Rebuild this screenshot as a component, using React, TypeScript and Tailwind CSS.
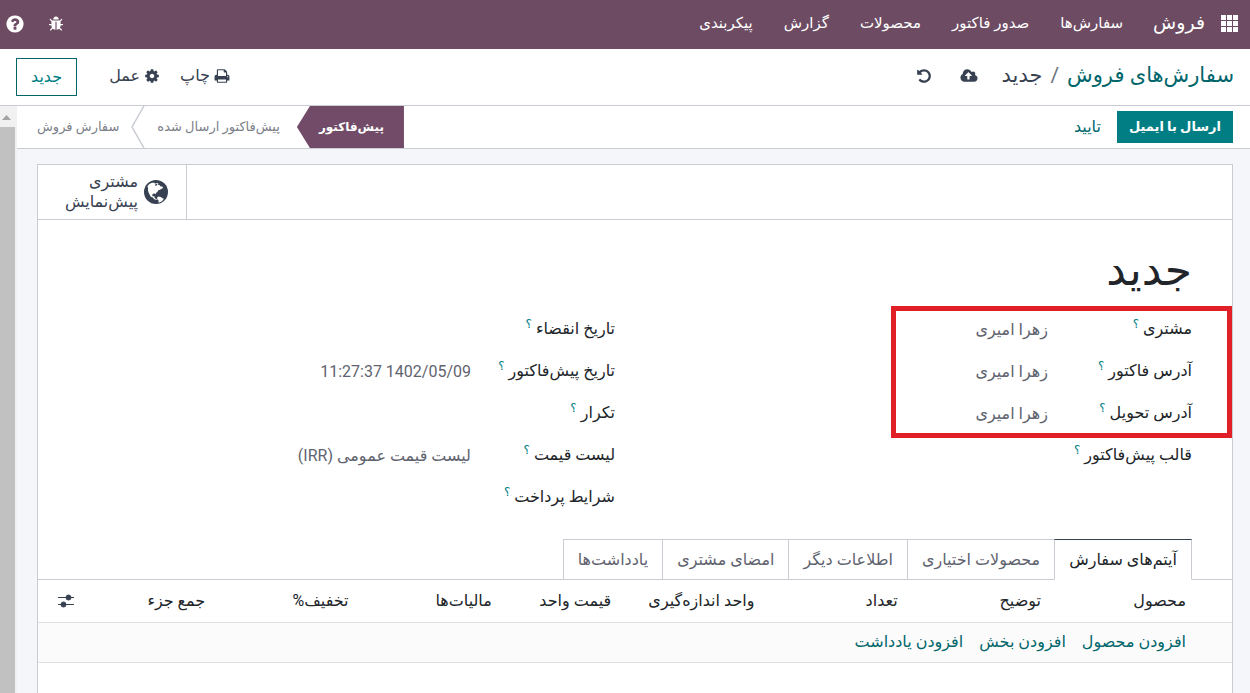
const ICONS = {
  question: {
    w: 1536,
    d: "M896 1376v-192q0-14-9-23t-23-9H672q-14 0-23 9t-9 23v192q0 14 9 23t23 9h192q14 0 23-9t9-23zm256-672q0-88-55.5-163T958 425t-170-41q-243 0-371 213-15 24 8 42l132 100q7 6 19 6 16 0 25-12 53-68 86-92 34-24 86-24 48 0 85.5 26t37.5 59q0 38-20 61t-68 45q-63 28-115.5 86.5T640 1020v36q0 14 9 23t23 9h192q14 0 23-9t9-23q0-19 21.5-49.5T972 957q32-18 49-28.5t46-35 44.5-48 28-60.5 12.5-81zm384 192q0 209-103 385.5T1153.500 1561 768 1664t-385.500-103T103 1281.500 0 896t103-385.500T382.500 231 768 128t385.500 103T1433 510.500 1536 896z",
  },
  bug: {
    w: 1664,
    d: "M1632 960q0 26-19 45t-45 19h-224q0 171-67 290l208 209q19 19 19 45t-19 45q-18 19-45 19t-45-19l-198-197q-5 5-15 13t-42 28.500-65 36.500-82 29-97 13V640H768v896q-51 0-101.500-13.500t-87-33-66-39-43.500-32.500l-15-14-183 207q-20 21-48 21-24 0-43-16-19-18-20.500-44.500T176 1525l202-227q-58-114-58-274H96q-26 0-45-19t-19-45 19-45 45-19h224V602L147 429q-19-19-19-45t19-45 45-19 45 19l173 173h844l173-173q19-19 45-19t45 19 19 45-19 45l-173 173v294h224q26 0 45 19t19 45zM1152 384H512q0-133 93.500-226.500T832 64t226.500 93.500T1152 384z",
  },
  print: {
    w: 1664,
    d: "M384 1536h896v-256H384v256zm0-640h896V512h-160q-40 0-68-28t-28-68V256H384v640zm1152 64q0-26-19-45t-45-19-45 19-19 45 19 45 45 19 45-19 19-45zm128 0v416q0 13-9.500 22.500t-22.500 9.500h-224v160q0 40-28 68t-68 28H352q-40 0-68-28t-28-68v-160H32q-13 0-22.500-9.500T0 1376V960q0-79 56.500-135.500T192 768h64V224q0-40 28-68t68-28h672q40 0 88 20t76 48l152 152q28 28 48 76t20 88v256h64q79 0 135.500 56.500T1664 960z",
  },
  cog: {
    w: 1536,
    d: "M1024 896q0-106-75-181t-181-75-181 75-75 181 75 181 181 75 181-75 75-181zm512-109v222q0 12-8 23t-20 13l-185 28q-19 54-39 91 35 50 107 138 10 12 10 25t-9 23q-27 37-99 108t-94 71q-12 0-26-9l-138-108q-44 23-91 38-16 136-29 186-7 28-36 28H657q-14 0-24.500-8.500T621 1642l-28-184q-49-16-90-37l-141 107q-10 9-25 9-14 0-25-11-126-114-165-168-7-10-7-23 0-12 8-23 15-21 51-66.500t54-70.500q-27-50-41-99L29 1048q-13-2-21-12.500T0 1012V790q0-12 8-23t19-13l186-28q14-46 39-92-40-57-107-138-10-12-10-24 0-10 9-23 26-36 98.500-107.500T337 270q13 0 26 10l138 107q44-23 91-38 16-136 29-186 7-28 36-28h222q14 0 24.500 8.500T915 165l28 184q49 16 90 37l142-107q9-9 24-9 13 0 25 10 129 119 165 170 7 8 7 22 0 12-8 23-15 21-51 66.500t-54 70.500q26 50 41 98l183 28q13 2 21 12.500t8 23.500z",
  },
  cloud: {
    w: 1920,
    d: "M1280 864q0-14-9-23L919 489q-9-9-23-9t-23 9L522 840q-10 12-10 24 0 14 9 23t23 9h224v352q0 13 9.500 22.500t22.500 9.500h192q13 0 22.500-9.500t9.500-22.500V896h224q13 0 22.500-9.500t9.500-22.500zm640 288q0 159-112.500 271.500T1536 1536H448q-185 0-316.500-131.500T0 1088q0-130 70-240t188-165q-2-30-2-43 0-212 150-362t362-150q156 0 285.500 87T1242 446q71-62 166-62 106 0 181 75t75 181q0 76-41 138 130 31 213.500 135.500T1920 1152z",
  },
  undo: {
    w: 1536,
    d: "M1536 896q0 156-61 298t-164 245-245 164-298 61q-172 0-327-72.500T177 1387q-7-10-6.500-22.500t8.500-20.500l137-138q10-9 25-9 16 2 23 12 73 95 179 147t225 52q104 0 198.500-40.500T1130 1258t109.500-163.500T1280 896t-40.500-198.500T1130 534 966.500 424.500 768 384q-98 0-188 35.500T420 521l137 138q31 30 14 69-17 40-59 40H64q-26 0-45-19T0 704V256q0-42 40-59 39-17 69 14l130 129q107-101 244.500-156.500T768 128q156 0 298 61t245 164 164 245 61 298z",
  },
};

const Icon = ({ name, className }: { name: keyof typeof ICONS; className: string }) => (
  <svg viewBox={`0 0 ${ICONS[name].w} 1792`} className={className} fill="currentColor" aria-hidden="true">
    <path d={ICONS[name].d} />
  </svg>
);

const Globe = () => (
  <svg viewBox="0 0 24 24" className="h-6 w-6 shrink-0" aria-hidden="true">
    <circle cx="12" cy="12" r="12" fill="#374151" />
    {/* North America */}
    <path
      fill="#fff"
      d="M3.400 6.200 5.300 4 8 2.700l2.200.1 1.200.9 1.300-.8 1.800.5-.6 1.400 1.500.3 1.300 1.300 1.600.2.900 1.500-1.700.7-1.500 1-1.700.5-.9 1.600-1.500 1.200-.2 1.400-.9-.9-1.900.2-.7 1.500.6 1.200 1.500-.4.2 1.300 1.300 1.500 1.400.5-.8.500-2-.7-1.700-1.700-1.900-.8-1.100-1.900-1.100-2.200-.7-2.400.200-2.200z"
    />
    {/* South America */}
    <path fill="#fff" d="m13.200 17.300 1.700-.8 1.900.5 1.400 1.100 1.600.6-.8 1.500-1.900 1.500-2.400 1.100-.2-2.300-1.400-1.500z" />
    <path fill="#374151" d="m11.500 4.200 1.300-.4.6.8-.7 1-1.200.2-.6-.8z" />
  </svg>
);

const menu = ["سفارش‌ها", "صدور فاکتور", "محصولات", "گزارش", "پیکربندی"];

const customerFields = [
  { id: "customer", label: "مشتری", value: "زهرا امیری" },
  { id: "invoice-address", label: "آدرس فاکتور", value: "زهرا امیری" },
  { id: "delivery-address", label: "آدرس تحویل", value: "زهرا امیری" },
  { id: "template", label: "قالب پیش‌فاکتور", value: "" },
];

const orderFields = [
  { id: "expiration", label: "تاریخ انقضاء", value: "" },
  { id: "quotation-date", label: "تاریخ پیش‌فاکتور", value: "1402/05/09 11:27:37" },
  { id: "recurrence", label: "تکرار", value: "" },
  { id: "pricelist", label: "لیست قیمت", value: "لیست قیمت عمومی (IRR)" },
  { id: "payment-terms", label: "شرایط پرداخت", value: "" },
];

const tabs = ["آیتم‌های سفارش", "محصولات اختیاری", "اطلاعات دیگر", "امضای مشتری", "یادداشت‌ها"];

const columns = [
  { label: "محصول", width: "w-[16%] pr-[46px]" },
  { label: "توضیح", width: "w-[12%]" },
  { label: "تعداد", width: "w-[12%]" },
  { label: "واحد اندازه‌گیری", width: "w-[12%]" },
  { label: "قیمت واحد", width: "w-[10%]" },
  { label: "مالیات‌ها", width: "w-[12%]" },
  { label: "تخفیف%", width: "w-[12%]" },
  { label: "جمع جزء", width: "w-[11%]" },
];

type FieldProps = { id: string; label: string; value: string };

const Field = ({ id, label, value }: FieldProps) => (
  <div className="flex h-[42px] items-center">
    <label htmlFor={id} className="w-36 shrink-0 whitespace-nowrap text-[#212529]">
      {label} <sup className="text-xs text-[#017e84]">؟</sup>
    </label>
    <input id={id} defaultValue={value} className="min-w-0 flex-1 bg-transparent pt-[2px] text-[#5f636f] outline-none" />
  </div>
);

const App = () => {
  return (
    <div dir="rtl" className="flex h-screen flex-col overflow-hidden bg-white font-['Roboto','DejaVu_Sans',sans-serif] text-base text-[#374151]">
      {/* Navbar */}
      <header className="flex h-[49px] shrink-0 items-center bg-[#6d4c63] pr-3 pb-[2px] pl-[6px] text-white">
        <button title="منو">
          <svg viewBox="0 0 17 17" className="h-[17px] w-[17px]" fill="currentColor">
            {[0, 6, 12].map((y) => [0, 6, 12].map((x) => <rect key={`${x}-${y}`} x={x} y={y} width="5" height="5" />))}
          </svg>
        </button>
        <a href="#" className="mr-4 text-[19px]">فروش</a>
        <nav className="mr-[30px] flex gap-[31px] text-[15px]">
          {menu.map((m) => (
            <a key={m} href="#">{m}</a>
          ))}
        </nav>
        <div className="mr-auto flex items-center gap-6">
          <button title="اشکال‌زدایی"><Icon name="bug" className="h-4 w-4" /></button>
          <button title="راهنما"><Icon name="question" className="h-5 w-[18px]" /></button>
        </div>
      </header>

      {/* Control panel */}
      <div className="flex h-[57px] shrink-0 items-center border-b border-[#c9ccd2] px-4 pb-[2px]">
        <h2 className="flex gap-2 text-[21px]">
          <a href="#" className="text-[#01666b]">سفارش‌های فروش</a>
          <span className="text-[#6b7280]">/</span>
          <span>جدید</span>
        </h2>
        <button title="ذخیره" className="mr-6"><Icon name="cloud" className="h-4 w-[18px]" /></button>
        <button title="لغو" className="mr-7"><Icon name="undo" className="h-4 w-4" /></button>
        <div className="mr-auto flex items-center">
          <button className="flex items-center gap-1"><Icon name="print" className="h-4 w-4" />چاپ</button>
          <button className="mr-5 flex items-center gap-1"><Icon name="cog" className="h-4 w-4" />عمل</button>
          <button className="mt-[2px] mr-8 h-[38px] border border-[#01666b] px-[14px] text-[#017e84]">جدید</button>
        </div>
      </div>

      <div className="flex min-h-0 flex-1">
        <main className="flex min-w-0 flex-1 flex-col bg-[#f5f6fa]">
          {/* Status bar */}
          <div className="flex h-[43px] shrink-0 items-center border-b border-[#c9ccd2] bg-white pr-[17px]">
            <button className="h-8 bg-[#017e84] px-3 text-[13px] font-bold text-white">ارسال با ایمیل</button>
            <button className="mr-4 text-[#01666b]">تایید</button>
            <div className="mr-auto flex items-center pl-5 text-[13px] text-[#7c7f89]">
              <button className="h-[42px] bg-[#714b67] pr-5 pl-[22px] text-xs font-bold text-white [clip-path:polygon(100%_0,100%_100%,13px_100%,0_50%,13px_0)]">
                پیش‌فاکتور
              </button>
              <button className="mr-[17px] h-[42px]">پیش‌فاکتور ارسال شده</button>
              <svg viewBox="0 0 14 42" className="mx-3 h-[42px] w-[14px]" fill="none" stroke="#c9ccd2" strokeWidth="1.500">
                <path d="M13 0 1 21l12 21" />
              </svg>
              <button className="h-[42px]">سفارش فروش</button>
            </div>
          </div>

          {/* Sheet */}
          <div className="mt-[15px] mr-[17px] ml-5 flex-1 border border-b-0 border-[#c9ccd2] bg-white">
            <div className="flex h-[55px] border-b border-[#c9ccd2]">
              <button className="mr-auto flex w-[149px] items-center gap-[6px] border-r border-[#c9ccd2] pr-[18px] text-right leading-5">
                <Globe />
                <span>مشتری<br />پیش‌نمایش</span>
              </button>
            </div>

            <h1 className="mt-5 pr-10 text-[44px] leading-[60px] text-[#212529]">جدید</h1>

            <div className="mt-2 flex pr-10">
              <div className="relative w-1/2 shrink-0">
                <div className="pointer-events-none absolute -top-[2px] -right-10 left-[276px] h-[132px] border-[5px] border-[#e01f26]" />
                {customerFields.map((f) => (
                  <Field key={f.id} id={f.id} label={f.label} value={f.value} />
                ))}
              </div>
              <div className="flex-1">
                {orderFields.map((f) => (
                  <Field key={f.id} id={f.id} label={f.label} value={f.value} />
                ))}
              </div>
            </div>

            {/* Notebook tabs */}
            <div className="mt-[21px] flex border-b border-[#c9ccd2] pr-10" role="tablist">
              {tabs.map((t, i) => (
                <button
                  key={t}
                  role="tab"
                  aria-selected={i === 0}
                  className={`-mb-px h-[41px] border px-[14px] ${
                    i === 0 ? "border-[#c9ccd2] border-t-[#374151] border-b-white text-[#212529]" : "border-r-0 border-[#c9ccd2] text-[#5f636f]"
                  }`}
                >
                  {t}
                </button>
              ))}
            </div>

            <table className="w-full table-fixed text-right">
              <thead>
                <tr className="h-[42px] border-b border-[#dee2e6] text-[#212529]">
                  {columns.map((c) => (
                    <th key={c.label} className={`${c.width} font-normal whitespace-nowrap`}>{c.label}</th>
                  ))}
                  <th>
                    <button title="ستون‌ها" className="block">
                      <svg viewBox="0 0 16 14" className="h-[14px] w-4" fill="#374151" stroke="#374151">
                        <path d="M0 3.500h16M0 10.500h16" />
                        <circle cx="10.500" cy="3.500" r="2.500" />
                        <circle cx="5.500" cy="10.500" r="2.500" />
                      </svg>
                    </button>
                  </th>
                </tr>
              </thead>
              <tbody>
                <tr className="h-10 border-b border-[#dee2e6] bg-[#fbfbfb]">
                  <td colSpan={9} className="pr-[46px]">
                    <div className="flex gap-4 text-[#01666b]">
                      <a href="#">افزودن محصول</a>
                      <a href="#">افزودن بخش</a>
                      <a href="#">افزودن یادداشت</a>
                    </div>
                  </td>
                </tr>
              </tbody>
            </table>
          </div>
        </main>

        {/* Scrollbar */}
        <div className="flex w-[17px] shrink-0 flex-col items-end bg-[#f1f1f1]">
          <svg viewBox="0 0 17 21" className="h-[21px] w-[17px]" fill="#a3a3a3">
            <path d="M2 14h9L6.500 9z" />
          </svg>
          <div className="w-[15px] flex-1 bg-[#c1c1c1]" />
        </div>
      </div>
    </div>
  );
};

export default App;
